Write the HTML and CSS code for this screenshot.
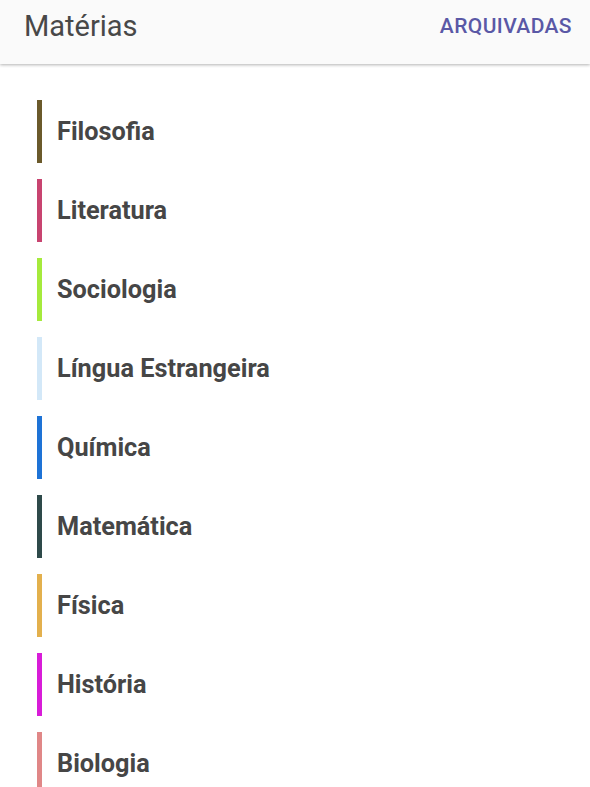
FILE: index.html
```html
<!DOCTYPE html>
<html lang="pt-BR">
<head>
    <meta charset="UTF-8">
    <meta name="viewport" content="width=device-width, initial-scale=1.0">
    <title>Matérias</title>
    <link rel="stylesheet" href="styles.css">
</head>
<body>
    <div class="toolbar">
        <h1 class="toolbar-title">Matérias</h1>
        <a class="toolbar-action" href="#">ARQUIVADAS</a>
    </div>

    <ul class="subjects">
        <li class="subject"><span class="subject-bar c-filosofia"></span><span class="subject-name">Filosofia</span></li>
        <li class="subject"><span class="subject-bar c-literatura"></span><span class="subject-name">Literatura</span></li>
        <li class="subject"><span class="subject-bar c-sociologia"></span><span class="subject-name">Sociologia</span></li>
        <li class="subject"><span class="subject-bar c-lingua"></span><span class="subject-name">Língua Estrangeira</span></li>
        <li class="subject"><span class="subject-bar c-quimica"></span><span class="subject-name">Química</span></li>
        <li class="subject"><span class="subject-bar c-matematica"></span><span class="subject-name">Matemática</span></li>
        <li class="subject"><span class="subject-bar c-fisica"></span><span class="subject-name">Física</span></li>
        <li class="subject"><span class="subject-bar c-historia"></span><span class="subject-name">História</span></li>
        <li class="subject"><span class="subject-bar c-biologia"></span><span class="subject-name">Biologia</span></li>
    </ul>
</body>
</html>
```

FILE: styles.css
```css
body { margin: 0; background: #fff; font-family: Roboto, "Noto Sans", Arial, sans-serif; overflow: hidden; }

.toolbar { height: 64px; box-sizing: border-box; padding: 0 18px 13px 24px; display: flex; align-items: center; justify-content: space-between; background: #fafafa; box-shadow: 0 1px 3px rgba(0,0,0,0.3); position: relative; }
.toolbar-title { margin: 0; font-size: 29px; line-height: 32px; font-weight: 400; color: #484848; }
.toolbar-action { font-size: 21px; line-height: 24px; font-weight: 500; letter-spacing: 0.4px; color: #5a58a6; text-decoration: none; }

.subjects { list-style: none; margin: 0; padding: 36px 0 0 37px; display: flex; flex-direction: column; gap: 16px; }
.subject { display: flex; align-items: center; gap: 15px; height: 63px; }
.subject-bar { width: 5px; height: 100%; }
.subject-name { font-size: 25.3px; font-weight: 700; color: #464646; }

.c-filosofia { background: #6b5a2b; }
.c-literatura { background: #c84470; }
.c-sociologia { background: #a5ea3c; }
.c-lingua { background: #d3e8f8; }
.c-quimica { background: #1e73d6; }
.c-matematica { background: #2e4a4a; }
.c-fisica { background: #e3b04d; }
.c-historia { background: #d81cd8; }
.c-biologia { background: #e08787; }
```
